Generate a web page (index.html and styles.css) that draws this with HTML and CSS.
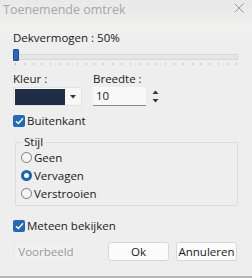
FILE: index.html
```html
<!DOCTYPE html>
<html>
<head>
<meta charset="utf-8">
<link rel="stylesheet" href="styles.css">
</head>
<body>
<div class="dialog">
  <div class="titlebar">
    <span class="title">Toenemende omtrek</span>
    <span class="close">
      <svg width="10" height="10" viewBox="0 0 10 10"><path d="M0.5 0.5L9.5 9.5M9.5 0.5L0.5 9.5" stroke="#9a9a9a" stroke-width="1"/></svg>
    </span>
  </div>
  <div class="content">
    <div class="label">Dekvermogen : 50%</div>
    <div class="slider">
      <div class="track"></div>
      <div class="thumb"></div>
      <div class="ticks">
        <i class="t1"></i><i></i><i></i><i></i><i></i><i></i><i></i><i></i><i></i><i></i><i></i><i></i><i></i><i></i><i></i><i></i><i></i><i></i><i></i><i></i><i></i><i></i><i></i><i></i><i></i><i></i>
      </div>
    </div>
    <div class="row2">
      <div class="col-color">
        <div class="label small">Kleur :</div>
        <div class="colorpick">
          <div class="swatch"></div>
          <span class="dd">
            <svg width="6" height="4" viewBox="0 0 6 4"><path d="M0 0H6L3 3.5Z" fill="#333"/></svg>
          </span>
        </div>
      </div>
      <div class="col-width">
        <div class="label small">Breedte :</div>
        <div class="numrow">
          <div class="num">10</div>
          <div class="spin">
            <svg width="7" height="16" viewBox="0 0 7 16"><path d="M0.5 5H6.5L3.5 1.5Z" fill="#333"/><path d="M0.5 10H6.5L3.5 13.5Z" fill="#333"/></svg>
          </div>
        </div>
      </div>
    </div>
    <label class="check first"><span class="box"><svg width="9" height="8" viewBox="0 0 9 8"><path d="M1 4.2L3.4 6.5L8 1.3" stroke="#fff" stroke-width="1.4" fill="none"/></svg></span>Buitenkant</label>
    <fieldset class="group">
      <legend>Stijl</legend>
      <div class="radio"><span class="rb"></span>Geen</div>
      <div class="radio"><span class="rb on"></span>Vervagen</div>
      <div class="radio"><span class="rb"></span>Verstrooien</div>
    </fieldset>
    <label class="check second"><span class="box"><svg width="9" height="8" viewBox="0 0 9 8"><path d="M1 4.2L3.4 6.5L8 1.3" stroke="#fff" stroke-width="1.4" fill="none"/></svg></span>Meteen bekijken</label>
    <div class="buttons">
      <div class="btn disabled">Voorbeeld</div>
      <div class="spacer"></div>
      <div class="btn ok">Ok</div>
      <div class="btn cancel">Annuleren</div>
    </div>
  </div>
</div>
</body>
</html>
```
FILE: styles.css
```css
html, body {
  margin: 0;
  padding: 0;
}
body {
  width: 252px;
  height: 278px;
  overflow: hidden;
  font-family: "Open Sans", "Noto Sans", sans-serif;
  font-size: 11.5px;
  color: #1a1a1a;
  background:
    linear-gradient(90deg, rgba(255,255,255,0) 0, rgba(255,255,255,0) 80px, rgba(255,255,255,0.35) 85px, rgba(255,255,255,0.35) 250px, rgba(255,255,255,0) 250px),
    #ececec;
}
.dialog {
  width: 252px;
  height: 278px;
  display: flex;
  flex-direction: column;
  box-sizing: border-box;
  border-bottom: 2px solid #b8b8b8;
}
.titlebar {
  height: 22px;
  display: flex;
  align-items: flex-start;
  justify-content: space-between;
  padding: 0 8px 0 3px;
  background: linear-gradient(180deg, #e9e9e9, #ededed);
}
.title {
  color: #a7a7a7;
  font-size: 12.5px;
  line-height: 20px;
}
.close {
  display: flex;
  padding-top: 3px;
}
.content {
  padding: 8px 13px 0 13px;
  display: flex;
  flex-direction: column;
  flex: 1;
  background: linear-gradient(180deg, #f1f1ee 0, #f0f0ee 8px, #eeeeee 18px);
}
.label {
  line-height: 16px;
}
.label.small {
  line-height: 14px;
}
.slider {
  position: relative;
  height: 16px;
  margin-top: 3px;
}
.track {
  position: absolute;
  left: 2px;
  right: 1px;
  top: 5px;
  height: 4px;
  background: #e6e6e6;
  border: 1px solid #d8d8d8;
  border-radius: 1px;
}
.thumb {
  position: absolute;
  left: 0;
  top: 0;
  width: 4px;
  height: 10px;
  background: #2d67b8;
  border: 1px solid #1a4f9a;
  border-radius: 1px;
}
.ticks {
  position: absolute;
  left: 2px;
  right: 2px;
  top: 14px;
  display: flex;
  justify-content: space-between;
}
.ticks i {
  display: block;
  width: 1px;
  height: 2px;
  background: #c4c4c4;
}
.ticks i.t1 {
  background: #e8a86a;
}
.row2 {
  display: flex;
  margin-top: 7px;
}
.col-color {
  width: 80px;
}
.colorpick {
  margin-top: 1px;
  width: 69px;
  height: 19px;
  box-sizing: border-box;
  border: 1px solid #e2e2e2;
  background: #f7f7f7;
  display: flex;
  align-items: center;
  padding: 1px 1px;
}
.swatch {
  width: 50px;
  height: 16px;
  background: #1e2c44;
}
.dd {
  flex: 1;
  display: flex;
  justify-content: center;
  padding-top: 1px;
}
.col-width {
  flex: 1;
}
.numrow {
  display: flex;
  align-items: center;
  margin-top: 1px;
}
.num {
  width: 53px;
  height: 19px;
  box-sizing: border-box;
  background: #f8f8f6;
  border-bottom: 1px solid #8a8a8a;
  padding: 1px 0 0 3px;
  line-height: 16px;
}
.spin {
  display: flex;
  margin-left: 6px;
}
.check {
  display: flex;
  align-items: center;
  line-height: 16px;
}
.check.first {
  margin-top: 7px;
}
.check.second {
  margin-top: 12px;
}
.box {
  width: 12px;
  height: 12px;
  border-radius: 2px;
  background: #2469b6;
  display: flex;
  align-items: center;
  justify-content: center;
  margin-right: 2px;
}
.group {
  margin: 7px 1px 0 2px;
  padding: 0 6px 3px 5px;
  border: 1px solid #dcdcdc;
  border-radius: 1px;
}
.group legend {
  padding: 0 2px;
  margin-left: 1px;
  line-height: 12px;
}
.radio {
  display: flex;
  align-items: center;
  height: 18px;
}
.rb {
  width: 11px;
  height: 11px;
  border-radius: 50%;
  border: 1px solid #7a7a7a;
  background: #f4f4f4;
  margin-right: 2px;
  box-sizing: border-box;
}
.rb.on {
  border: 3px solid #1f62ad;
  background: #ffffff;
}
.buttons {
  display: flex;
  margin-top: 8px;
}
.btn {
  height: 19px;
  line-height: 18px;
  text-align: center;
  box-sizing: border-box;
  border: 1px solid #d7d7d7;
  border-radius: 3px;
  background: #fbfbfb;
}
.btn.disabled {
  width: 64px;
  margin-left: 1px;
  color: #9a9a9a;
  background: #f0f0f0;
  border-color: #ebebeb;
}
.spacer {
  flex: 1;
}
.btn.ok {
  width: 61px;
  margin-right: 7px;
}
.btn.cancel {
  width: 61px;
  margin-right: 2px;
}
```
